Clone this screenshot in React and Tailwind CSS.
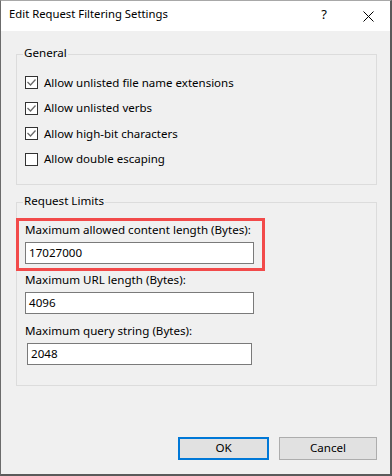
import React from "react";

const font = { fontFamily: "'Noto Sans', 'Liberation Sans', sans-serif" };

function Check({ checked, label }) {
  return (
    <div className="flex items-center h-[13px] gap-[6px]">
      <div className="w-[13px] h-[13px] border border-[#333333] bg-white shrink-0 relative">
        {checked && (
          <svg width="13" height="13" viewBox="0 0 13 13" className="absolute -left-px -top-px">
            <path d="M2.5 6 L5.5 9 L10.5 3.5" fill="none" stroke="#6a6a6a" strokeWidth="1.3" />
          </svg>
        )}
      </div>
      <span className="text-[11.5px] leading-[16px] text-black whitespace-nowrap">{label}</span>
    </div>
  );
}

function Field({ label, value, labelMt, inputClass }) {
  return (
    <div className={labelMt}>
      <div className="text-[11.6px] leading-[16px] text-black whitespace-nowrap">{label}</div>
      <div className={"mt-[4px] h-[22px] border border-[#7a7a7a] bg-white flex items-center px-[3px] text-[11.6px] leading-[16px] text-black " + inputClass}>
        {value}
      </div>
    </div>
  );
}

export default function App() {
  return (
    <div
      className="w-[392px] h-[476px] bg-[#f0f0f0] border-l border-t border-r-2 border-b-2 border-l-[#6b6b6b] border-t-[#a8a8a8] border-r-[#5a5a5a] border-b-[#5a5a5a] flex flex-col"
      style={font}
    >
      <div className="h-[30px] bg-white flex items-start pt-[5px] pl-[8px] pr-[16px] shrink-0">
        <span className="text-[11.3px] leading-[16px] text-black flex-1 whitespace-nowrap">
          Edit Request Filtering Settings
        </span>
        <span className="text-[13px] leading-[16px] text-black mr-[36px]">?</span>
        <svg width="11" height="11" viewBox="0 0 11 11" className="mt-[5px]">
          <path d="M0.5 0.5 L10.5 10.5 M10.5 0.5 L0.5 10.5" stroke="#000" strokeWidth="1" />
        </svg>
      </div>

      <div className="flex flex-col pl-[15px] pr-[13px]">
        <div className="relative mt-[23px] border border-[#dcdcdc] pl-[8px] pt-[21px] pb-[18px] flex flex-col gap-[12.67px]">
          <span className="absolute left-[6px] top-[-10px] px-[1px] bg-[#f0f0f0] text-[11.6px] leading-[16px] text-black">
            General
          </span>
          <Check checked label="Allow unlisted file name extensions" />
          <Check checked label="Allow unlisted verbs" />
          <Check checked label="Allow high-bit characters" />
          <Check label="Allow double escaping" />
        </div>

        <div className="relative mt-[17px] border border-[#dcdcdc] pl-[8px] pt-[19px] pb-[20px] flex flex-col">
          <span className="absolute left-[6px] top-[-10px] px-[1px] bg-[#f0f0f0] text-[11.6px] leading-[16px] text-black">
            Request Limits
          </span>
          <Field label="Maximum allowed content length (Bytes):" value="17027000" labelMt="" inputClass="w-[229px]" />
          <Field label="Maximum URL length (Bytes):" value="4096" labelMt="mt-[8px]" inputClass="w-[229px]" />
          <Field label="Maximum query string (Bytes):" value="2048" labelMt="mt-[9px]" inputClass="w-[225px] ml-[2px]" />
          <div className="absolute left-[-1px] top-[15px] w-[249px] h-[53px] border-[3px] border-[#f24a4a] pointer-events-none" />
        </div>

        <div className="mt-[51px] flex justify-end gap-[10px]">
          <div className="w-[91px] h-[23px] border-2 border-[#0078d7] bg-[#e1e1e1] flex items-center justify-center text-[11.6px] leading-[16px] text-black">
            OK
          </div>
          <div className="w-[98px] h-[23px] border border-[#adadad] bg-[#e1e1e1] flex items-center justify-center text-[11.6px] leading-[16px] text-black">
            Cancel
          </div>
        </div>
      </div>
    </div>
  );
}
